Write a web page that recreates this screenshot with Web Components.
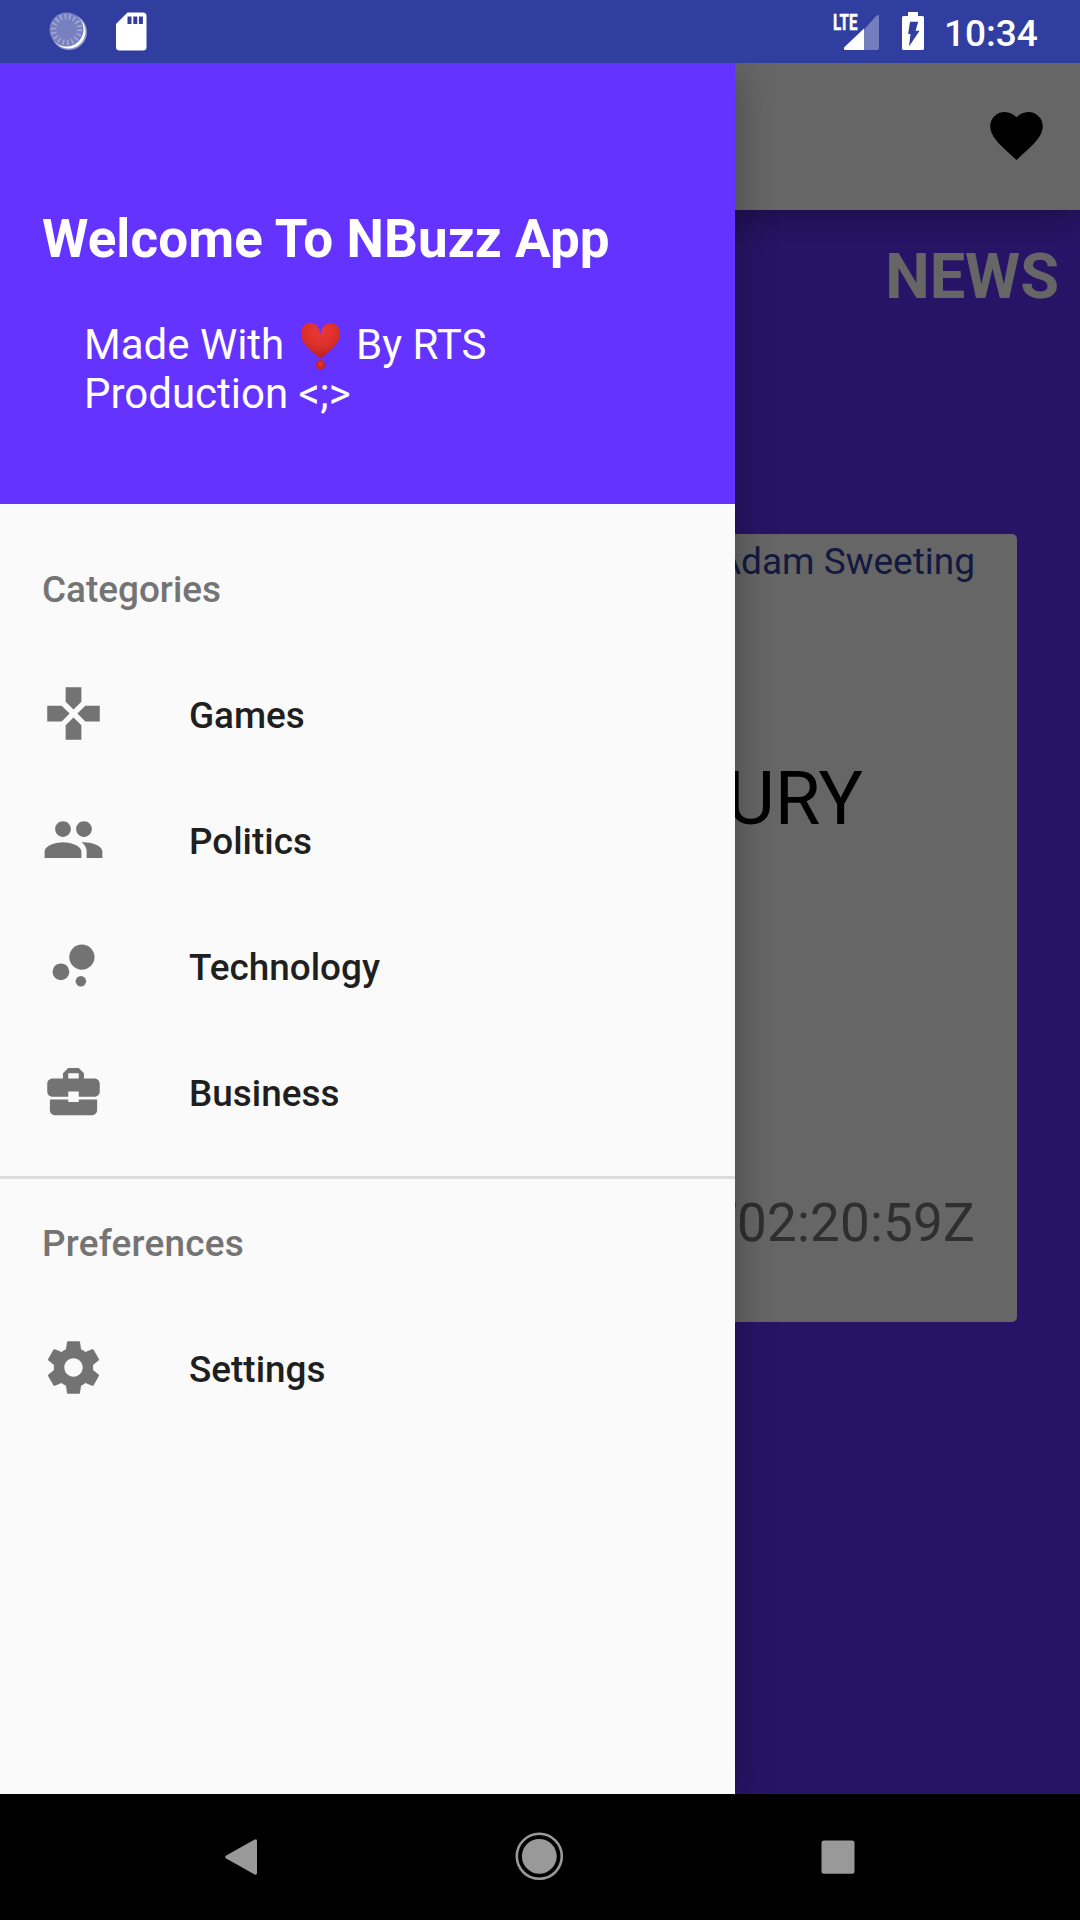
<!DOCTYPE html>
<html lang="en">
<head>
<meta charset="utf-8">
<title>NBuzz</title>
<style>
html,body{margin:0;height:1920px;width:1080px;overflow:hidden;background:#000}
body{font-family:Roboto,"Noto Sans",sans-serif}
</style>
</head>
<body>
<nbuzz-app></nbuzz-app>
<script>
const define = (name, html) => customElements.define(name, class extends HTMLElement {
  constructor() {
    super();
    const t = document.createElement('template');
    t.innerHTML = html;
    this.attachShadow({mode: 'open'}).append(t.content.cloneNode(true));
  }
});

const ICONS = {
  games: '<path d="M15 7.5V2H9v5.5l3 3 3-3zM7.5 9H2v6h5.5l3-3-3-3zM9 16.5V22h6v-5.5l-3-3-3 3zM16.5 9l-3 3 3 3H22V9h-5.5z"/>',
  people: '<path d="M16 11c1.660 0 2.990-1.340 2.990-3S17.660 5 16 5s-3 1.340-3 3 1.340 3 3 3zm-8 0c1.660 0 2.990-1.340 2.990-3S9.660 5 8 5 5 6.340 5 8s1.340 3 3 3zm0 2c-2.330 0-7 1.170-7 3.500V19h14v-2.500c0-2.330-4.670-3.500-7-3.500zm8 0c-.290 0-.620.020-.970.050 1.160.840 1.970 1.970 1.970 3.450V19h6v-2.500c0-2.330-4.670-3.500-7-3.500z"/>',
  bubbles: '<circle cx="7.200" cy="14.400" r="3.200"/><circle cx="14.800" cy="18" r="2"/><circle cx="15.200" cy="8.800" r="4.800"/>',
  business: '<path d="M10 16v-1H3.010L3 19c0 1.110.890 2 2 2h14c1.110 0 2-.890 2-2v-4h-7v1h-4zm10-9h-4.010V5l-2-2h-4l-2 2v2H4c-1.100 0-2 .900-2 2v3c0 1.110.890 2 2 2h6v-2h4v2h6c1.100 0 2-.900 2-2V9c0-1.100-.900-2-2-2zm-6 0h-4V5h4v2z"/>',
  settings: '<path d="M19.430 12.980c.040-.320.070-.640.070-.980s-.030-.660-.070-.980l2.110-1.650c.190-.150.240-.420.120-.640l-2-3.460c-.120-.220-.390-.300-.610-.220l-2.490 1c-.520-.400-1.080-.730-1.690-.980l-.380-2.650C14.460 2.180 14.250 2 14 2h-4c-.250 0-.460.180-.490.420l-.380 2.650c-.610.250-1.170.590-1.690.980l-2.490-1c-.230-.090-.490 0-.610.220l-2 3.460c-.130.220-.070.490.120.640l2.110 1.650c-.040.320-.070.650-.070.980s.030.660.070.980l-2.110 1.650c-.190.150-.240.420-.120.640l2 3.460c.120.220.390.300.610.220l2.490-1c.520.400 1.080.730 1.690.980l.380 2.650c.030.240.240.420.490.420h4c.250 0 .460-.180.490-.420l.380-2.650c.610-.250 1.170-.590 1.690-.980l2.490 1c.230.090.490 0 .610-.220l2-3.460c.120-.220.070-.490-.120-.640l-2.110-1.650zM12 15.500c-1.930 0-3.500-1.570-3.500-3.500s1.570-3.500 3.500-3.500 3.500 1.570 3.500 3.500-1.570 3.500-3.500 3.500z"/>',
  heart: '<path d="M12 21.350l-1.450-1.320C5.400 15.360 2 12.280 2 8.500 2 5.420 4.420 3 7.500 3c1.740 0 3.410.810 4.500 2.090C13.090 3.810 14.760 3 16.500 3 19.580 3 22 5.420 22 8.500c0 3.780-3.400 6.860-8.550 11.540L12 21.350z"/>'
};

customElements.define('md-icon', class extends HTMLElement {
  connectedCallback() {
    if (this.shadowRoot) return;
    this.attachShadow({mode: 'open'}).innerHTML =
      `<style>:host{display:block;width:63px;height:63px;flex:none}svg{display:block;fill:currentColor}</style>
       <svg width="63" height="63" viewBox="0 0 24 24">${ICONS[this.getAttribute('name')] || ''}</svg>`;
  }
});

define('status-bar', `
<style>
:host{display:flex;height:63px;background:#303e9f;color:#fff;align-items:flex-start;justify-content:space-between}
svg{display:block}
.right{display:flex}
time{font-size:37px;font-weight:500;line-height:67px;width:136px}
</style>
<svg width="200" height="63">
  <circle cx="69" cy="32" r="18" fill="#fff" fill-opacity=".45"/>
  <circle cx="68.500" cy="31.500" r="17" fill="#fff"/>
  <circle cx="66.500" cy="29.500" r="17" fill="#7880bf"/>
  <circle cx="66.500" cy="29.500" r="13" fill="none" stroke="#a5abd6" stroke-width="5.400" stroke-dasharray="1.500 3.038"/>
  <path d="M127.500 12.500H143a3.500 3.500 0 0 1 3.500 3.500V47a3.500 3.500 0 0 1-3.500 3.500H119.500a3.500 3.500 0 0 1-3.500-3.500V24z" fill="#fff"/>
  <path d="M127.500 16.500h4V24h-4zm5.800 0h4V24h-4zm5.600 0h4V24h-4z" fill="#303e9f"/>
</svg>
<div class="right">
  <svg width="120" height="63" viewBox="824 0 120 63" fill="#fff">
    <text x="833" y="30" font-size="22.500" font-weight="700" stroke="#fff" stroke-width=".5" textLength="24.500" lengthAdjust="spacingAndGlyphs">LTE</text>
    <path d="M864 29.500 876.600 15.500q2.400-1.500 2.400 1V48a2 2 0 0 1-2 2H864z" fill-opacity=".33"/>
    <path d="M864 28.500V50H845q-2-1-.500-3z"/>
    <path d="M908 12h10v4h4.500a1.500 1.500 0 0 1 1.500 1.500v31a1.500 1.500 0 0 1-1.500 1.500h-19a1.500 1.500 0 0 1-1.500-1.500v-31a1.500 1.500 0 0 1 1.500-1.500h4.500z"/>
    <path d="M910 21.800h8.200l-2.600 9h4L909 46.500l1.500-12.500h-2.300z" fill="#303e9f"/>
  </svg>
  <time>10:34</time>
</div>`);

define('news-page', `
<style>
:host{display:flex;flex-direction:column;background:#6433ff;overflow:hidden}
header{height:147px;flex:none;background:#fff;display:flex;align-items:center;justify-content:flex-end;padding:0 32px 2px 0;box-sizing:border-box;box-shadow:0 6px 34px rgba(0,0,0,.34);color:#000}
h1{margin:0;color:#fff;font-size:63px;line-height:74px;font-weight:700;text-align:right;padding:30px 21px 0 0}
article{margin:220px 63px 0;height:788px;box-sizing:border-box;background:#fff;border-radius:5px;padding:0 42px;display:flex;flex-direction:column;text-align:right}
.author{color:#303f9f;font-size:37px;line-height:43px;padding-top:6px}
.title{color:#000;font-size:74px;line-height:86px;padding:173px 112px 0 0}
.date{color:#757575;font-size:53px;line-height:62px;letter-spacing:.2px;padding-top:350px}
</style>
<header><md-icon name="heart"></md-icon></header>
<h1>NEWS</h1>
<article>
  <div class="author">Adam Sweeting</div>
  <div class="title">URY</div>
  <div class="date">T02:20:59Z</div>
</article>`);

define('drawer-header', `
<style>
:host{display:flex;flex-direction:column;height:441px;flex:none;box-sizing:border-box;background:#6433ff;color:#fff;padding:145px 42px 0}
h2{margin:0;font-size:53px;letter-spacing:.09px;line-height:62px;font-weight:700;white-space:nowrap}
p{margin:50px 42px 0;font-size:42px;line-height:49px}
svg{display:inline-block;vertical-align:-9px;margin:-10px 0 -5px -1px;position:relative;top:-3px}
</style>
<h2>Welcome To NBuzz App</h2>
<p>Made With <svg width="52" height="48" viewBox="0 0 52 48" role="img" aria-label="heart exclamation">
  <defs><radialGradient id="g" cx=".5" cy=".25" r=".75"><stop offset="0" stop-color="#e93834"/><stop offset=".5" stop-color="#dd312d"/><stop offset="1" stop-color="#b9201f"/></radialGradient></defs>
  <path d="M26.500 13C25.500 5 21.500 1 16.500 1 10.500 1 7 5.500 7 12 7 21 16 29 26.500 36.500 37 29 46 21 46 12 46 5.500 42.500 1 36.500 1 31.500 1 27.500 5 26.500 13z" fill="url(#g)"/>
  <circle cx="26.500" cy="42.700" r="4.600" fill="#c82421"/><circle cx="26.500" cy="42.200" r="2.700" fill="#df322e"/>
</svg> By RTS<br>Production &lt;;&gt;</p>`);

define('drawer-subheader', `
<style>:host{display:block;height:126px;box-sizing:border-box;padding:3px 42px 0;line-height:126px;font-size:36.900px;font-weight:500;color:#747474}</style>
<slot></slot>`);

define('drawer-item', `
<style>
:host{display:flex;height:126px;align-items:center;padding:0 42px;gap:84px;font-size:36.880px;font-weight:500;color:#1f1f1f}
::slotted(md-icon){color:#737373}
span{padding-top:4px}
</style>
<slot name="icon"></slot><span><slot></slot></span>`);

define('nav-drawer', `
<style>
:host{display:flex;flex-direction:column;width:735px;background:#fafafa;box-shadow:0 10px 38px rgba(0,0,0,.32)}
nav{padding-top:20px}
hr{margin:22px 0 0;border:0;height:3px;background:#dcdcdc}
hr+drawer-subheader{margin-top:-1px;letter-spacing:.25px}
</style>
<drawer-header></drawer-header>
<nav>
  <drawer-subheader>Categories</drawer-subheader>
  <drawer-item><md-icon slot="icon" name="games"></md-icon>Games</drawer-item>
  <drawer-item><md-icon slot="icon" name="people"></md-icon>Politics</drawer-item>
  <drawer-item><md-icon slot="icon" name="bubbles"></md-icon>Technology</drawer-item>
  <drawer-item><md-icon slot="icon" name="business"></md-icon>Business</drawer-item>
  <hr>
  <drawer-subheader>Preferences</drawer-subheader>
  <drawer-item><md-icon slot="icon" name="settings"></md-icon>Settings</drawer-item>
</nav>`);

define('system-nav', `
<style>
:host{display:block;height:126px;background:#000}
svg{display:block}
</style>
<svg width="1080" height="126" fill="#999">
  <path d="M254.200 45.800q2.800-1.500 2.800 1.500V78.700q0 3-2.800 1.500L226.200 64.500q-2-1.500 0-3z"/>
  <circle cx="539.300" cy="62.300" r="17.400"/>
  <circle cx="539.300" cy="62.300" r="22.500" fill="none" stroke="#999" stroke-width="2.600"/>
  <rect x="821.500" y="46.500" width="33" height="33.300" rx="2.500"/>
</svg>`);

define('nbuzz-app', `
<style>
:host{display:flex;flex-direction:column;width:1080px;height:1920px;overflow:hidden}
main{display:grid;grid-template:1fr/1080px;flex:1;min-height:0;overflow:hidden}
main>*{grid-area:1/1;min-height:0}
.scrim{background:rgba(0,0,0,.6);z-index:1}
nav-drawer{z-index:2}
</style>
<status-bar></status-bar>
<main>
  <news-page></news-page>
  <div class="scrim"></div>
  <nav-drawer></nav-drawer>
</main>
<system-nav></system-nav>`);
</script>
</body>
</html>
